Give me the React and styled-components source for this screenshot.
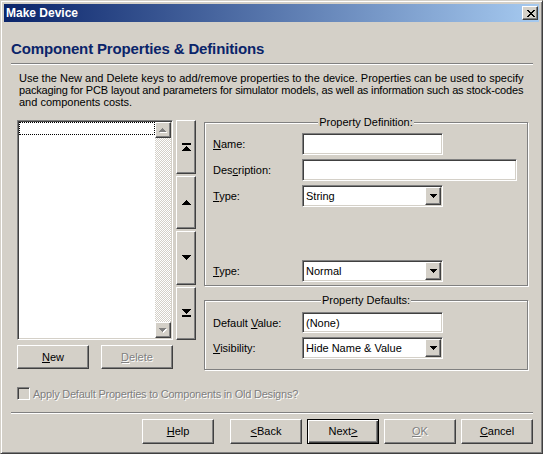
import React from 'react';
import styled, { createGlobalStyle, css } from 'styled-components';

const FACE = '#d4d0c8';

const Global = createGlobalStyle`
  html, body { margin: 0; padding: 0; background: ${FACE}; }
  *, *::before, *::after { box-sizing: border-box; }
  body { font-family: "Liberation Sans", Arial, sans-serif; font-size: 11px; color: #000; }
`;

const raised = css`
  border: 1px solid;
  border-color: #fff #404040 #404040 #fff;
  box-shadow: inset -1px -1px #808080, inset 1px 1px ${FACE};
  background: ${FACE};
`;

const sunken = css`
  border: 1px solid;
  border-color: #808080 #fff #fff #808080;
  box-shadow: inset 1px 1px #404040, inset -1px -1px ${FACE};
`;

const disabledText = css`
  color: #808080;
  text-shadow: 1px 1px 0 #fff;
`;

const Window = styled.div`
  width: 543px;
  height: 454px;
  border: 1px solid;
  border-color: ${FACE} #404040 #404040 ${FACE};
  box-shadow: inset 1px 1px #fff, inset -1px -1px #808080;
  padding: 3px;
  background: ${FACE};
  display: flex;
  flex-direction: column;
`;

const TitleBar = styled.div`
  height: 18px;
  display: flex;
  align-items: center;
  justify-content: space-between;
  padding: 0 1px 0 2px;
  background: linear-gradient(to right, #0a246a, #a6caf0);
  color: #fff;
  font: bold 12px/18px "Liberation Sans", Arial, sans-serif;
`;

const CloseButton = styled.div`
  ${raised};
  width: 16px;
  height: 14px;
  display: flex;
  align-items: center;
  justify-content: center;
  padding-left: 1px;
`;

const Content = styled.div`
  flex: 1;
  display: flex;
  flex-direction: column;
  padding: 0 6px 0 7px;
`;

const Heading = styled.h1`
  margin: 19px 0 6px;
  font: bold 15px/16px "Liberation Sans", Arial, sans-serif;
  letter-spacing: -0.15px;
  color: #0a246a;
`;

const Separator = styled.div`
  height: 2px;
  border-top: 1px solid #808080;
  border-bottom: 1px solid #fff;
  margin-top: ${p => p.$mt || 0}px;
`;

const Intro = styled.div`
  margin: 7px 0 0 8px;
  line-height: 12px;
  white-space: nowrap;
`;

const IntroLine = styled.div`
  letter-spacing: ${p => p.$ls || 0}px;
`;

const MainRow = styled.div`
  display: flex;
  align-items: flex-start;
  margin: 12px 0 0 6px;
`;

const LeftCol = styled.div`
  width: 156px;
  display: flex;
  flex-direction: column;
`;

const ListBox = styled.div`
  ${sunken};
  background: #fff;
  height: 220px;
  padding: 1px;
  display: flex;
`;

const ListArea = styled.div`
  flex: 1;
`;

const FocusItem = styled.div`
  height: 13px;
  border: 1px dotted #000;
`;

const ScrollBar = styled.div`
  width: 16px;
  display: flex;
  flex-direction: column;
`;

const ScrollButton = styled.div`
  ${raised};
  width: 16px;
  height: 16px;
  display: flex;
  align-items: center;
  justify-content: center;
`;

const ScrollTrack = styled.div`
  flex: 1;
  background: repeating-conic-gradient(#fff 0% 25%, ${FACE} 0% 50%) 0 0 / 2px 2px;
`;

const ButtonPair = styled.div`
  display: flex;
  gap: 12px;
  margin-top: 5px;
`;

const PushButton = styled.div`
  ${raised};
  width: ${p => p.$w || 72}px;
  height: ${p => p.$h || 24}px;
  display: flex;
  align-items: center;
  justify-content: center;
  line-height: 13px;
  ${p => p.$disabled && disabledText};
  ${p => p.$default && css`
    border: 1px solid #000;
    box-shadow: inset 1px 1px #fff, inset -1px -1px #404040, inset -2px -2px #808080;
  `};
`;

const MoveColumn = styled.div`
  width: 20px;
  height: 220px;
  margin-left: 3px;
  display: flex;
  flex-direction: column;
  gap: 2px;
`;

const MoveButton = styled.div`
  ${raised};
  flex: 1;
  display: flex;
  align-items: center;
  justify-content: center;
`;

const RightCol = styled.div`
  width: 324px;
  margin-left: 8px;
  display: flex;
  flex-direction: column;
`;

const GroupBox = styled.div`
  border: 1px solid #808080;
  box-shadow: inset 1px 1px #fff, 1px 1px #fff;
  height: ${p => p.$h}px;
  margin-top: ${p => p.$mt}px;
  padding: 0 8px;
  display: flex;
  flex-direction: column;
`;

const GroupTitle = styled.div`
  align-self: center;
  margin-top: -7px;
  padding: 0 1px;
  line-height: 13px;
  background: ${FACE};
`;

const FormRow = styled.div`
  display: flex;
  align-items: center;
  margin-top: ${p => p.$mt}px;
`;

const FieldLabel = styled.div`
  width: 89px;
`;

const TextField = styled.div`
  ${sunken};
  background: #fff;
  width: ${p => p.$w}px;
  height: ${p => p.$h || 22}px;
  padding: 0 3px;
  display: flex;
  align-items: center;
`;

const Select = styled.div`
  ${sunken};
  background: #fff;
  width: 141px;
  height: 22px;
  padding: 1px;
  display: flex;
  align-items: stretch;
`;

const SelectValue = styled.div`
  flex: 1;
  padding-left: 2px;
  display: flex;
  align-items: center;
`;

const DropButton = styled.div`
  ${raised};
  width: 16px;
  display: flex;
  align-items: center;
  justify-content: center;
`;

const CheckRow = styled.div`
  display: flex;
  align-items: center;
  gap: 3px;
  margin: 17px 0 0 6px;
  height: 13px;
`;

const CheckBox = styled.div`
  ${sunken};
  width: 13px;
  height: 13px;
  background: ${FACE};
`;

const CheckLabel = styled.span`
  ${disabledText};
  letter-spacing: -0.22px;
`;

const FooterRow = styled.div`
  display: flex;
  justify-content: flex-end;
  gap: 5px;
  margin-top: 5px;
`;

const Spacer = styled.div`
  width: 6px;
`;

const Glyph = styled.svg`
  display: block;
`;

const Pixels = ({ rows, color = '#000', shadow }) => {
  const w = rows[0].length;
  const h = rows.length;
  let d = '';
  rows.forEach((r, y) => {
    for (let x = 0; x < w; x++) if (r[x] === '1') d += `M${x} ${y}h1v1h-1z`;
  });
  const ex = shadow ? 1 : 0;
  return (
    <Glyph width={w + ex} height={h + ex} shapeRendering="crispEdges">
      {shadow && <path d={d} fill={shadow} transform="translate(1 1)" />}
      <path d={d} fill={color} />
    </Glyph>
  );
};

const X = ['11000011', '01100110', '00111100', '00011000', '00111100', '01100110', '11000011'];
const DOWN7 = ['1111111', '0111110', '0011100', '0001000'];
const UP7 = [...DOWN7].reverse();
const UP9 = ['000010000', '000111000', '001111100', '011111110', '111111111'];
const DOWN9 = [...UP9].reverse();
const BAR9 = ['111111111', '111111111'];
const BLANK9 = ['000000000'];

const Dropdown = ({ value }) => (
  <Select>
    <SelectValue>{value}</SelectValue>
    <DropButton><Pixels rows={DOWN7} /></DropButton>
  </Select>
);

export default function App() {
  return (
    <>
      <Global />
      <Window>
        <TitleBar>
          <span>Make Device</span>
          <CloseButton><Pixels rows={X} /></CloseButton>
        </TitleBar>
        <Content>
          <Heading>Component Properties &amp; Definitions</Heading>
          <Separator />
          <Intro>
            <IntroLine>Use the New and Delete keys to add/remove properties to the device. Properties can be used to specify</IntroLine>
            <IntroLine $ls={-0.16}>packaging for PCB layout and parameters for simulator models, as well as information such as stock-codes</IntroLine>
            <IntroLine>and components costs.</IntroLine>
          </Intro>
          <MainRow>
            <LeftCol>
              <ListBox>
                <ListArea>
                  <FocusItem />
                </ListArea>
                <ScrollBar>
                  <ScrollButton><Pixels rows={UP7} color="#808080" shadow="#fff" /></ScrollButton>
                  <ScrollTrack />
                  <ScrollButton><Pixels rows={DOWN7} color="#808080" shadow="#fff" /></ScrollButton>
                </ScrollBar>
              </ListBox>
              <ButtonPair>
                <PushButton><span><u>N</u>ew</span></PushButton>
                <PushButton $disabled><span><u>D</u>elete</span></PushButton>
              </ButtonPair>
            </LeftCol>
            <MoveColumn>
              <MoveButton><Pixels rows={[...BAR9, ...BLANK9, ...UP9]} /></MoveButton>
              <MoveButton><Pixels rows={UP9} /></MoveButton>
              <MoveButton><Pixels rows={DOWN9} /></MoveButton>
              <MoveButton><Pixels rows={[...DOWN9, ...BLANK9, ...BAR9]} /></MoveButton>
            </MoveColumn>
            <RightCol>
              <GroupBox $h={164} $mt={2}>
                <GroupTitle>Property Definition:</GroupTitle>
                <FormRow $mt={4}>
                  <FieldLabel><u>N</u>ame:</FieldLabel>
                  <TextField $w={141} />
                </FormRow>
                <FormRow $mt={4}>
                  <FieldLabel>Des<u>c</u>ription:</FieldLabel>
                  <TextField $w={215} />
                </FormRow>
                <FormRow $mt={4}>
                  <FieldLabel><u>T</u>ype:</FieldLabel>
                  <Dropdown value="String" />
                </FormRow>
                <FormRow $mt={53}>
                  <FieldLabel><u>T</u>ype:</FieldLabel>
                  <Dropdown value="Normal" />
                </FormRow>
              </GroupBox>
              <GroupBox $h={70} $mt={14}>
                <GroupTitle>Property Defaults:</GroupTitle>
                <FormRow $mt={5}>
                  <FieldLabel>Default <u>V</u>alue:</FieldLabel>
                  <TextField $w={141} $h={21}>(None)</TextField>
                </FormRow>
                <FormRow $mt={4}>
                  <FieldLabel><u>V</u>isibility:</FieldLabel>
                  <Dropdown value="Hide Name &amp; Value" />
                </FormRow>
              </GroupBox>
            </RightCol>
          </MainRow>
          <CheckRow>
            <CheckBox />
            <CheckLabel>Apply Default Properties to Components in Old Designs?</CheckLabel>
          </CheckRow>
          <Separator $mt={12} />
          <FooterRow>
            <PushButton $h={25}><span><u>H</u>elp</span></PushButton>
            <Spacer />
            <PushButton $h={25}><span><u>&lt;</u>Back</span></PushButton>
            <PushButton $h={25} $default><span>Next<u>&gt;</u></span></PushButton>
            <PushButton $h={25} $disabled><span><u>O</u>K</span></PushButton>
            <PushButton $h={25}><span><u>C</u>ancel</span></PushButton>
          </FooterRow>
        </Content>
      </Window>
    </>
  );
}
